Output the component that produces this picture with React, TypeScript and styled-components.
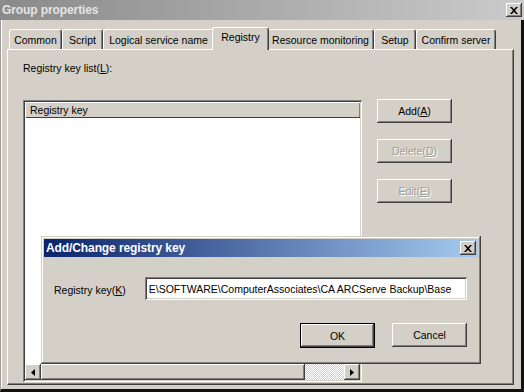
import React from 'react';
import styled, { createGlobalStyle } from 'styled-components';

const GlobalStyle = createGlobalStyle`
    body {
        margin: 0;
        background: #e4e4e4;
        font-family: "Liberation Sans", Arial, sans-serif;
        font-size: 10.5px;
        color: #000;
    }
`;

const raised = `
    box-shadow: inset -1px -1px #404040, inset 1px 1px #fff, inset -2px -2px #808080, inset 2px 2px #d4d0c8;
`;

const sunken = `
    box-shadow: inset 1px 1px #808080, inset -1px -1px #fff, inset 2px 2px #404040, inset -2px -2px #d4d0c8;
`;

const Window = styled.div`
    position: relative;
    width: 524px;
    height: 392px;
    display: flex;
    flex-direction: column;
    background: #d4d0c8;
    overflow: hidden;
`;

const TitleBar = styled.div<{ $active?: boolean; $h: number }>`
    height: ${({ $h }) => $h}px;
    flex-shrink: 0;
    display: flex;
    align-items: center;
    justify-content: space-between;
    padding: 0 2px 0 2px;
    background: ${({ $active }) => $active
        ? 'linear-gradient(to right, #0a246a, #a6caf0)'
        : 'linear-gradient(to right, #8a8a8a, #cbcbcb)'};
    color: ${({ $active }) => $active ? '#fff' : '#e4e4e4'};
    font-weight: bold;
    font-size: 12px;
    letter-spacing: -0.1px;
`;

const CloseButton = styled.div`
    width: 16px;
    height: 14px;
    box-sizing: border-box;
    background: #d4d0c8;
    display: flex;
    align-items: center;
    justify-content: center;
    ${raised}
`;

const Body = styled.div`
    flex: 1;
    display: flex;
    flex-direction: column;
    padding: 8px 7px 4px 6px;
    border-left: 1px solid #9c9c9c;
    border-right: 3px solid #111;
    border-bottom: 3px solid #111;
    box-shadow: inset 1px 0 #fff;
    min-height: 0;
`;

const TabStrip = styled.div`
    height: 21px;
    display: flex;
    align-items: flex-end;
    padding-left: 2px;
`;

const Tab = styled.div<{ $w: number; $selected?: boolean }>`
    box-sizing: border-box;
    position: relative;
    z-index: ${({ $selected }) => $selected ? 1 : 0};
    width: ${({ $w, $selected }) => $selected ? $w + 4 : $w}px;
    height: ${({ $selected }) => $selected ? 23 : 20}px;
    margin: 0 ${({ $selected }) => $selected ? -2 : 0}px ${({ $selected }) => $selected ? -1 : 0}px;
    padding-bottom: ${({ $selected }) => $selected ? 4 : 0}px;
    display: flex;
    align-items: center;
    justify-content: center;
    white-space: nowrap;
    background: #d4d0c8;
    border-top: 1px solid #fff;
    border-left: 1px solid #fff;
    border-right: 1px solid #404040;
    border-radius: 3px 3px 0 0;
    box-shadow: inset -1px 0 #808080;
`;

const Panel = styled.div`
    flex: 1;
    display: flex;
    flex-direction: column;
    padding: 12px 0 2px 15px;
    border-top: 1px solid #fff;
    border-left: 1px solid #fff;
    border-right: 1px solid #404040;
    border-bottom: 1px solid #404040;
    box-shadow: inset -1px -1px #808080;
    min-height: 0;
`;

const Label = styled.div`
    line-height: 13px;
    white-space: nowrap;
`;

const ContentRow = styled.div`
    flex: 1;
    display: flex;
    margin-top: 25px;
    min-height: 0;
`;

const ListView = styled.div`
    width: 339px;
    box-sizing: border-box;
    padding: 2px;
    display: flex;
    flex-direction: column;
    background: #fff;
    ${sunken}
`;

const ListHeader = styled.div`
    height: 16px;
    flex-shrink: 0;
    display: flex;
    align-items: center;
    padding-left: 5px;
    background: #d4d0c8;
    box-shadow: inset 1px 1px #fff, inset 0 -1px #404040, inset -1px 0 #808080;
`;

const ListBody = styled.div`
    flex: 1;
    background: #fff;
`;

const ScrollBar = styled.div`
    height: 16px;
    flex-shrink: 0;
    display: flex;
`;

const ScrollArrow = styled.div`
    width: 16px;
    height: 16px;
    box-sizing: border-box;
    background: #d4d0c8;
    display: flex;
    align-items: center;
    justify-content: center;
    ${raised}
`;

const ScrollThumb = styled.div<{ $w: number }>`
    width: ${({ $w }) => $w}px;
    background: #d4d0c8;
    ${raised}
`;

const ScrollTrack = styled.div`
    flex: 1;
    background: repeating-conic-gradient(#fff 0 25%, #d4d0c8 0 50%) 0 0 / 2px 2px;
`;

const ButtonColumn = styled.div`
    display: flex;
    flex-direction: column;
    gap: 16px;
    margin: -1px 0 0 15px;
`;

const Button = styled.div<{ $disabled?: boolean; $default?: boolean }>`
    width: 75px;
    height: ${({ $default }) => $default ? 25 : 24}px;
    box-sizing: border-box;
    display: flex;
    align-items: center;
    justify-content: center;
    white-space: nowrap;
    background: #d4d0c8;
    color: ${({ $disabled }) => $disabled ? '#a09c94' : '#000'};
    text-shadow: ${({ $disabled }) => $disabled ? '1px 1px #fff' : 'none'};
    box-shadow: ${({ $default }) => $default
        ? 'inset 0 0 0 1px #000, inset -2px -2px #404040, inset 2px 2px #fff, inset -3px -3px #808080'
        : 'inset -1px -1px #404040, inset 1px 1px #fff, inset -2px -2px #808080, inset 2px 2px #d4d0c8'};
`;

const Dialog = styled.div`
    position: absolute;
    left: 41px;
    top: 236px;
    width: 440px;
    height: 128px;
    box-sizing: border-box;
    padding: 3px;
    display: flex;
    flex-direction: column;
    background: #d4d0c8;
    box-shadow: inset -1px -1px #404040, inset 1px 1px #d4d0c8, inset -2px -2px #808080, inset 2px 2px #fff;
`;

const DialogBody = styled.div`
    flex: 1;
    display: flex;
    flex-direction: column;
    padding: 20px 11px 0 10px;
`;

const FieldRow = styled.div`
    display: flex;
    align-items: center;
`;

const FieldLabel = styled.div`
    width: 91px;
    white-space: nowrap;
    padding-top: 3px;
`;

const TextInput = styled.div`
    width: 323px;
    height: 23px;
    box-sizing: border-box;
    padding: 0 0 0 4px;
    display: flex;
    align-items: center;
    white-space: nowrap;
    overflow: hidden;
    background: #fff;
    ${sunken}
`;

const DialogButtons = styled.div`
    display: flex;
    justify-content: flex-end;
    gap: 17px;
    margin-top: 23px;
`;

const CloseGlyph = () => (
    <svg width="8" height="7" viewBox="0 0 8 7">
        <path d="M0 0h2l2 2.3L6 0h2L5 3.5 8 7H6L4 4.7 2 7H0l3-3.5z" fill="#000" />
    </svg>
);

const ArrowGlyph: React.FC<{ dir: 'left' | 'right' }> = ({ dir }) => (
    <svg width="4" height="7" viewBox="0 0 4 7">
        <path d={dir === 'left' ? 'M4 0v7L0 3.5z' : 'M0 0v7l4-3.5z'} fill="#000" />
    </svg>
);

const tabs = [
    { label: 'Common', width: 53 },
    { label: 'Script', width: 41 },
    { label: 'Logical service name', width: 111 },
    { label: 'Registry', width: 53, selected: true },
    { label: 'Resource monitoring', width: 107 },
    { label: 'Setup', width: 42 },
    { label: 'Confirm server', width: 80 },
];

const App: React.FC = () => {
    return (
        <>
            <GlobalStyle />
            <Window>
                <TitleBar $h={20}>
                    <span>Group properties</span>
                    <CloseButton><CloseGlyph /></CloseButton>
                </TitleBar>
                <Body>
                    <TabStrip>
                        {tabs.map((tab) => (
                            <Tab key={tab.label} $w={tab.width} $selected={tab.selected}>
                                {tab.label}
                            </Tab>
                        ))}
                    </TabStrip>
                    <Panel>
                        <Label>Registry key list(<u>L</u>):</Label>
                        <ContentRow>
                            <ListView>
                                <ListHeader>Registry key</ListHeader>
                                <ListBody />
                                <ScrollBar>
                                    <ScrollArrow><ArrowGlyph dir="left" /></ScrollArrow>
                                    <ScrollThumb $w={264} />
                                    <ScrollTrack />
                                    <ScrollArrow><ArrowGlyph dir="right" /></ScrollArrow>
                                </ScrollBar>
                            </ListView>
                            <ButtonColumn>
                                <Button>Add(<u>A</u>)</Button>
                                <Button $disabled>Delete(<u>D</u>)</Button>
                                <Button $disabled>Edit(<u>E</u>)</Button>
                            </ButtonColumn>
                        </ContentRow>
                    </Panel>
                </Body>

                <Dialog>
                    <TitleBar $active $h={18}>
                        <span>Add/Change registry key</span>
                        <CloseButton><CloseGlyph /></CloseButton>
                    </TitleBar>
                    <DialogBody>
                        <FieldRow>
                            <FieldLabel>Registry key(<u>K</u>)</FieldLabel>
                            <TextInput>E\SOFTWARE\ComputerAssociates\CA ARCServe Backup\Base</TextInput>
                        </FieldRow>
                        <DialogButtons>
                            <Button $default>OK</Button>
                            <Button>Cancel</Button>
                        </DialogButtons>
                    </DialogBody>
                </Dialog>
            </Window>
        </>
    );
};

export default App;
